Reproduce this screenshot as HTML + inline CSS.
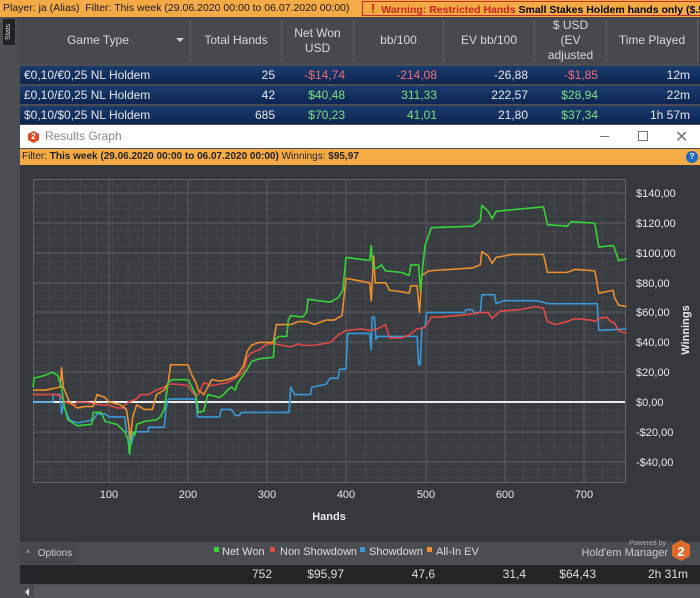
<!DOCTYPE html>
<html><head><meta charset="utf-8"><style>
*{margin:0;padding:0;box-sizing:border-box}
body{width:700px;height:598px;overflow:hidden;background:#4a4d51;font-family:"Liberation Sans",sans-serif;position:relative;font-size:12px}
.abs{position:absolute}
#top{left:0;top:0;width:700px;height:17px;background:#f4ab45;color:#1a1a1a;font-size:10.5px;line-height:17px;padding-left:3px;white-space:nowrap;overflow:hidden}
#warn{left:362px;top:1px;width:338px;height:15px;border:1px solid #c4302a;border-right:none;background:#f4ab45;line-height:13px;font-size:10.5px;padding-left:8px;white-space:nowrap;font-weight:bold;overflow:hidden}
#side{left:0;top:17px;width:17px;height:581px;background:#4c4f53}
#stats{left:3px;top:19px;width:12px;height:26px;background:#222;color:#ddd;font-size:7px;writing-mode:vertical-rl;transform:rotate(180deg);text-align:center;line-height:12px}
#hdr{left:17px;top:17px;width:683px;height:47px;background:#46494e;color:#d8d8d8;font-size:12px;overflow:hidden}
.hc{position:absolute;top:0;height:47px;display:flex;align-items:center;justify-content:center;text-align:center;line-height:15px}
.sep{position:absolute;top:3px;width:1px;height:42px;background:#5d6065}
.row{position:absolute;left:20px;width:680px;height:18px;background:linear-gradient(#1b3c6e,#0d2552);color:#e6e6e6;font-size:12px;line-height:18px}
.row span{position:absolute;text-align:right}
.r{color:#f07070}.g{color:#7ee07e}
#win{left:20px;top:125px;width:680px;height:23px;background:#fff}
#filt{left:20px;top:149px;width:680px;height:16px;background:#f4ab45;font-size:10px;line-height:16px;padding-left:2px;color:#222;white-space:nowrap}
#graph{left:20px;top:165px;width:680px;height:377px;background:#35383c}
#opt{left:20px;top:543px;width:57px;height:21px;background:#45484c;color:#ccc;font-size:10px;line-height:21px}
#tot{left:20px;top:565px;width:680px;height:19px;background:#232528;color:#ddd;font-size:12px;line-height:19px}
#tot span{position:absolute;text-align:right}
#scroll{left:20px;top:585px;width:680px;height:13px;background:#55585c}
</style></head><body>
<div id="top" class="abs">Player: ja (Alias)&nbsp;&nbsp;Filter: This week (29.06.2020 00:00 to 06.07.2020 00:00)</div>
<div id="warn" class="abs"><span style="color:#d3231d;font-size:13px">!</span>&nbsp; <span style="color:#c8231d">Warning: Restricted Hands</span> Small Stakes Holdem hands only ($.50 NL, $1 L</div>
<div id="side" class="abs"></div>
<div id="stats" class="abs">Stats</div>
<div id="hdr" class="abs">
<div class="hc" style="left:40px;width:82px">Game Type</div>
<div class="abs" style="left:159px;top:21px;width:0;height:0;border-left:4px solid transparent;border-right:4px solid transparent;border-top:4px solid #ccc"></div>
<div class="sep" style="left:173px"></div>
<div class="hc" style="left:174px;width:90px">Total Hands</div>
<div class="sep" style="left:264px"></div>
<div class="hc" style="left:265px;width:71px">Net Won<br>USD</div>
<div class="sep" style="left:336px"></div>
<div class="hc" style="left:337px;width:89px">bb/100</div>
<div class="sep" style="left:426px"></div>
<div class="hc" style="left:427px;width:90px">EV bb/100</div>
<div class="sep" style="left:517px"></div>
<div class="hc" style="left:518px;width:71px">$ USD<br>(EV<br>adjusted</div>
<div class="sep" style="left:589px"></div>
<div class="hc" style="left:590px;width:90px">Time Played</div>
<div class="sep" style="left:680px"></div>
</div>
<div class="row" style="top:66px"><span style="left:4px">€0,10/€0,25 NL Holdem</span><span style="right:425px">25</span><span class="r" style="right:355px">-$14,74</span><span class="r" style="right:263px">-214,08</span><span style="right:172px">-26,88</span><span class="r" style="right:102px">-$1,85</span><span style="right:10px">12m</span></div>
<div class="row" style="top:86px"><span style="left:4px">£0,10/£0,25 NL Holdem</span><span style="right:425px">42</span><span class="g" style="right:355px">$40,48</span><span class="g" style="right:263px">311,33</span><span style="right:172px">222,57</span><span class="g" style="right:102px">$28,94</span><span style="right:10px">22m</span></div>
<div class="row" style="top:106px"><span style="left:4px">$0,10/$0,25 NL Holdem</span><span style="right:425px">685</span><span class="g" style="right:355px">$70,23</span><span class="g" style="right:263px">41,01</span><span style="right:172px">21,80</span><span class="g" style="right:102px">$37,34</span><span style="right:10px">1h 57m</span></div>
<div id="win" class="abs">
<div class="abs" style="left:8px;top:6px;width:11px;height:12px;background:#e0471f;clip-path:polygon(50% 0,100% 25%,100% 75%,50% 100%,0 75%,0 25%);color:#fff;font-size:8px;font-weight:bold;text-align:center;line-height:12px">2</div>
<div class="abs" style="left:25px;top:4px;color:#888;font-size:12px">Results Graph</div>
<div class="abs" style="left:580px;top:11px;width:9px;height:1px;background:#777"></div>
<div class="abs" style="left:618px;top:6px;width:10px;height:10px;border:1px solid #777"></div>
<div class="abs" style="left:655px;top:2px;color:#777;font-size:16px">✕</div>
</div>
<div id="filt" class="abs">Filter: <b>This week (29.06.2020 00:00 to 06.07.2020 00:00)</b> Winnings: <b>$95,97</b>
<div class="abs" style="left:666px;top:2px;width:12px;height:12px;border-radius:6px;background:#1f6ac4;color:#fff;font-size:8px;line-height:12px;text-align:center;font-weight:bold">?</div></div>
<div id="graph" class="abs"></div>
<svg class="abs" style="left:0;top:0" width="700" height="598">
<defs><pattern id="mn" x="33" y="179" width="15.8" height="7.45" patternUnits="userSpaceOnUse"><path d="M0 0H15.8M0 0V7.45" stroke="#464a4f" stroke-width="1" fill="none"/></pattern></defs>
<rect x="33" y="179" width="592" height="303" fill="#393c40"/>
<rect x="33" y="179" width="592" height="303" fill="url(#mn)"/>
<g stroke="#595c61" stroke-width="1">
<path d="M109 179V482M188 179V482M267 179V482M346 179V482M426 179V482M505 179V482M584 179V482"/>
<path d="M33 193H625M33 223H625M33 253H625M33 283H625M33 312H625M33 342H625M33 372H625M33 432H625M33 462H625"/>
</g>
<rect x="33.5" y="179.5" width="592" height="303" fill="none" stroke="#5f6267"/>
<line x1="33" y1="402" x2="625" y2="402" stroke="#eee" stroke-width="2"/>
<g transform="translate(30,402) scale(0.79,-1.49)" fill="none" stroke-width="1.6" stroke-linejoin="round">
<polyline vector-effect="non-scaling-stroke" stroke="#3a98d8" points="4,0 29,0 29,5 38,5 40,-8 42,-2 50,-12 60,-14 70,-13 80,-12 85,-8 95,-8 100,-10 120,-10 122,-20 125,-20 127,-30 130,-25 133,-20 150,-20 150,-17 170,-17 172,-5 175,2 210,2 212,-10 240,-10 242,-5 255,-5 260,-9 265,-9 268,-7 328,-7 330,10 335,5 355,5 357,10 375,12 380,16 390,16 392,22 400,22 402,46 430,46 432,35 433,57 436,57 438,42 440,44 490,44 492,25 494,25 496,50 500,50 502,60 550,60 552,62 560,62 562,60 570,60 572,72 588,72 590,66 600,68 640,68 650,67 655,66 718,66 720,48 755,49"/>
<polyline vector-effect="non-scaling-stroke" stroke="#e04a48" points="4,5 35,5 40,3 45,0 55,-2 60,0 70,0 80,-1 90,-2 100,-2 110,-4 118,-4 120,-2 125,0 130,1 135,2 140,5 150,5 160,8 170,10 175,12 185,12 200,11 205,7 210,4 213,5 220,13 230,11 240,12 250,13 260,16 270,20 275,30 280,33 290,35 300,39 310,39 320,38 330,37 340,39 345,38 360,38 370,39 380,40 390,45 400,48 420,49 430,48 440,49 450,52 455,43 470,43 480,45 490,49 500,50 508,57 520,57 540,58 560,59 570,60 580,60 585,56 595,61 620,62 640,64 650,63 655,54 665,52 680,54 690,56 710,55 715,54 720,56 730,57 735,54 740,53 745,48 755,46"/>
<polyline vector-effect="non-scaling-stroke" stroke="#ec8f2c" points="4,8 20,8 38,10 40,23 42,10 50,0 60,-4 70,-3 80,-3 85,5 95,3 100,0 115,-2 122,-5 125,-15 127,-25 130,-10 135,-2 145,-5 155,-5 160,5 170,8 175,13 178,25 200,25 205,18 210,13 213,8 220,5 225,10 230,15 240,14 250,15 260,17 265,20 270,24 275,34 280,38 290,40 308,40 312,52 330,52 340,54 350,54 360,52 375,55 385,55 395,58 400,83 430,80 432,68 435,98 437,80 450,80 455,75 470,74 480,73 482,78 490,78 493,60 496,85 505,88 560,90 570,92 572,101 580,98 585,93 590,97 610,99 650,99 655,87 680,87 690,89 715,88 720,73 738,75 740,70 745,65 755,64"/>
<polyline vector-effect="non-scaling-stroke" stroke="#37d23a" points="4,10 5,16 20,18 28,20 35,18 40,10 43,-2 48,-12 60,-16 78,-15 80,-7 90,-7 95,-13 110,-15 120,-20 124,-25 126,-35 128,-25 130,-20 133,-22 135,-15 145,-13 160,-12 165,-10 170,-5 172,3 175,13 180,15 200,15 205,10 210,5 213,-7 220,-6 225,5 240,3 245,5 250,8 255,10 260,8 262,12 270,18 275,22 280,27 290,29 308,30 310,42 315,44 325,44 327,55 330,58 345,57 350,60 352,69 365,68 380,67 390,70 396,75 400,97 430,95 432,105 434,90 440,90 445,92 450,88 470,87 480,85 482,92 492,92 494,75 500,105 508,117 560,118 570,122 572,132 580,128 585,123 590,128 610,129 650,131 655,119 680,118 685,121 715,120 720,104 738,105 740,103 745,95 755,96"/>
</g>
<g fill="#e8e8e8" font-size="11" font-family="Liberation Sans">
<text x="636" y="197">$140,00</text><text x="636" y="227">$120,00</text><text x="636" y="257">$100,00</text><text x="636" y="287">$80,00</text><text x="636" y="316">$60,00</text><text x="636" y="346">$40,00</text><text x="636" y="376">$20,00</text><text x="636" y="406">$0,00</text><text x="636" y="436">-$20,00</text><text x="636" y="466">-$40,00</text>
<text x="109" y="498" text-anchor="middle">100</text><text x="188" y="498" text-anchor="middle">200</text><text x="267" y="498" text-anchor="middle">300</text><text x="346" y="498" text-anchor="middle">400</text><text x="426" y="498" text-anchor="middle">500</text><text x="505" y="498" text-anchor="middle">600</text><text x="584" y="498" text-anchor="middle">700</text>
<text x="329" y="520" text-anchor="middle" font-weight="bold">Hands</text>
<text transform="translate(689,330) rotate(-90)" text-anchor="middle" font-weight="bold">Winnings</text>
</g>
<g font-size="11" font-family="Liberation Sans" fill="#ddd">
<rect x="214" y="547" width="5" height="5" fill="#37d23a"/><text x="222" y="555">Net Won</text>
<rect x="270" y="547" width="5" height="5" fill="#e04a48"/><text x="280" y="555">Non Showdown</text>
<rect x="360" y="547" width="5" height="5" fill="#3a98d8"/><text x="369" y="555">Showdown</text>
<rect x="427" y="547" width="5" height="5" fill="#ec8f2c"/><text x="436" y="555">All-In EV</text>
<text x="666" y="545" text-anchor="end" font-size="7" fill="#aaa">Powered by</text>
<text x="668" y="556" text-anchor="end" font-size="11" fill="#ccc">Hold'em Manager</text>
</g>
<polygon points="681,540 690,545 690,556 681,561 672,556 672,545" fill="#e06a2a"/>
<text x="681" y="556" text-anchor="middle" font-size="13" font-weight="bold" fill="#fff" font-family="Liberation Sans">2</text>
</svg>
<div id="opt" class="abs"><span style="margin:0 8px 0 6px;font-size:8px">^</span>Options</div>
<div id="tot" class="abs"><span style="right:428px">752</span><span style="right:356px">$95,97</span><span style="right:265px">47,6</span><span style="right:174px">31,4</span><span style="right:104px">$64,43</span><span style="right:12px">2h 31m</span></div>
<div id="scroll" class="abs"><div class="abs" style="left:0;top:0;width:14px;height:13px;background:#4a4d51"></div><div class="abs" style="left:5px;top:3px;border-right:4px solid #ddd;border-top:4px solid transparent;border-bottom:4px solid transparent"></div></div>
</body></html>
